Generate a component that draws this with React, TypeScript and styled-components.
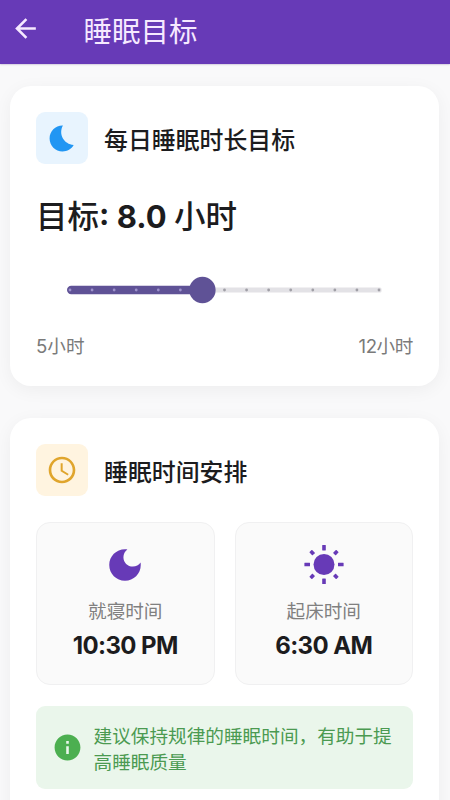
import React from "react";
import styled, { createGlobalStyle } from "styled-components";

const GlobalStyle = createGlobalStyle`
  * { box-sizing: border-box; }
  html, body { margin: 0; height: 100%; overflow: hidden; }
  body {
    background: #f9f9fa;
    color: #1c1c1e;
    font-family: Inter, "Noto Sans CJK SC", sans-serif;
  }
  svg { display: block; flex: none; }
`;

const Screen = styled.div`
  height: 800px;
  overflow: hidden;
  display: flex;
  flex-direction: column;
`;

const AppBar = styled.header`
  flex: none;
  height: 64px;
  padding: 0 0 5px 10px;
  display: flex;
  align-items: center;
  gap: 42.5px;
  background: #673ab7;
  color: #f6e9ff;
  box-shadow: 0 0 2px rgba(70, 40, 120, 0.5);
`;

const BackButton = styled.button`
  padding: 0;
  margin-top: -3px;
  border: 0;
  background: none;
  color: inherit;
`;

const AppTitle = styled.h1`
  margin: 0;
  font: 400 28.5px/40px "Noto Sans CJK SC", sans-serif;
`;

const Content = styled.main`
  flex: none;
  padding: 22px 11px 0 10px;
  display: flex;
  flex-direction: column;
  gap: 32px;
`;

const Card = styled.section<{ $height: number }>`
  height: ${(p) => p.$height}px;
  padding: 26px 26px 0;
  border-radius: 21px;
  background: #fff;
  box-shadow: 0 4px 18px rgba(0, 0, 0, 0.05);
`;

const CardHeader = styled.div`
  display: flex;
  align-items: center;
  gap: 16px;
`;

const IconBox = styled.div<{ $bg: string; $fg: string }>`
  width: 52px;
  height: 52px;
  border-radius: 9px;
  display: grid;
  place-items: center;
  background: ${(p) => p.$bg};
  color: ${(p) => p.$fg};
`;

const CardTitle = styled.h2`
  margin: 2px 0 0;
  font: 500 23.9px/36px "Noto Sans CJK SC", sans-serif;
`;

const Goal = styled.div`
  height: 46px;
  margin-top: 27px;
  display: flex;
  align-items: baseline;
  white-space: pre;
  font: 500 31.5px/46px "Noto Sans CJK SC", sans-serif;
`;

const GoalNumber = styled.span`
  font: 700 31px/46px Inter, sans-serif;
`;

const Slider = styled.div`
  height: 28px;
  margin: 39px 31px 0;
`;

const RangeLabels = styled.div`
  margin-top: 28px;
  display: flex;
  justify-content: space-between;
  font-size: 18.6px;
  line-height: 28px;
  color: #7a7a7a;
`;

const RangeLabel = styled.span<{ $tracking?: number }>`
  letter-spacing: ${(p) => p.$tracking ?? 0}px;
`;

const Tiles = styled.div`
  margin-top: 26px;
  display: grid;
  grid-template-columns: 1fr 1fr;
  gap: 20px;
`;

const Tile = styled.div`
  height: 163px;
  padding-top: 21px;
  border: 1.5px solid #f0f0f1;
  border-radius: 14px;
  background: #fafafa;
  display: flex;
  flex-direction: column;
  align-items: center;
  color: #673ab7;
`;

const TileLabel = styled.div`
  margin-top: 10px;
  font: 400 18.6px/28px "Noto Sans CJK SC", sans-serif;
  color: #808080;
`;

const TileTime = styled.div`
  margin-top: 4px;
  font-size: 24px;
  font-weight: 700;
  line-height: 36px;
  letter-spacing: -0.6px;
  color: #1c1c1e;
`;

const Tip = styled.div`
  height: 83px;
  margin-top: 21px;
  padding: 0 16px;
  border-radius: 9px;
  background: #eaf6eb;
  display: flex;
  align-items: center;
  gap: 10.5px;
  color: #4caf50;
`;

const TipText = styled.p`
  flex: none;
  width: 304px;
  margin: 1px 0 0;
  font: 400 18.65px/26.5px "Noto Sans CJK SC", sans-serif;
  color: #4b9a51;
`;

const MaterialIcon = ({ size, d }: { size: number; d: string }) => (
  <svg width={size} height={size} viewBox="0 0 24 24" fill="currentColor">
    <path d={d} />
  </svg>
);

const ICONS = {
  back: "M20 11H7.83l5.59-5.59L12 4l-8 8 8 8 1.41-1.41L7.83 13H20v-2z",
  bedtime:
    "M12.34 2.02C6.59 1.82 2 6.42 2 12c0 5.52 4.48 10 10 10 3.71 0 6.93-2.02 8.66-5.02-7.51-.25-12.09-8.43-8.32-14.96z",
  schedule:
    "M11.99 2C6.47 2 2 6.48 2 12s4.47 10 9.99 10C17.52 22 22 17.52 22 12S17.52 2 11.99 2zM12 20c-4.42 0-8-3.58-8-8s3.58-8 8-8 8 3.58 8 8-3.58 8-8 8zm.5-13H11v6l5.25 3.15.75-1.23-4.5-2.67z",
  darkMode:
    "M12 3c-4.97 0-9 4.03-9 9s4.03 9 9 9 9-4.03 9-9c0-.46-.04-.92-.1-1.36-.98 1.37-2.58 2.26-4.4 2.26-2.98 0-5.4-2.42-5.4-5.4 0-1.81.89-3.42 2.26-4.4-.44-.06-.9-.1-1.36-.1z",
  info: "M12 2C6.48 2 2 6.48 2 12s4.48 10 10 10 10-4.48 10-10S17.52 2 12 2zm1 15h-2v-6h2v6zm0-8h-2V7h2v2z",
};

const SunIcon = () => (
  <svg width="42" height="42" viewBox="-21 -20.5 42 42" fill="currentColor">
    <circle r="10.5" />
    {[0, 45, 90, 135, 180, 225, 270, 315].map((angle) => {
      const diagonal = angle % 90 !== 0;
      return (
        <rect
          key={angle}
          x="-1.8"
          y={diagonal ? -19 : -19.6}
          width="3.6"
          height={diagonal ? 4.4 : 5.6}
          rx="0.4"
          transform={`rotate(${angle})`}
        />
      );
    })}
  </svg>
);

const TICKS = 15;
const VALUE_INDEX = 6;
const tickX = (i: number) => 3 + (i * 309) / (TICKS - 1);

const HourSlider = () => (
  <Slider>
    <svg width="315" height="28" viewBox="0 0 315 28">
      <rect x="100" y="11.5" width="214.5" height="5" rx="1.5" fill="#e3e2e6" />
      <rect x="0" y="9.8" width="140" height="8.4" rx="4.2" fill="#5f5296" />
      {Array.from({ length: TICKS }, (_, i) => (
        <circle
          key={i}
          cx={tickX(i)}
          cy="14"
          r="1.4"
          fill={i < VALUE_INDEX ? "#9e92cc" : "#a09fa6"}
        />
      ))}
      <circle cx={tickX(VALUE_INDEX)} cy="14" r="13.2" fill="#5f5296" />
    </svg>
  </Slider>
);

export default function App() {
  return (
    <Screen>
      <GlobalStyle />
      <AppBar>
        <BackButton aria-label="返回">
          <MaterialIcon size={31} d={ICONS.back} />
        </BackButton>
        <AppTitle>睡眠目标</AppTitle>
      </AppBar>
      <Content>
        <Card $height={300}>
          <CardHeader>
            <IconBox $bg="#e8f4fe" $fg="#2196f3">
              <MaterialIcon size={31} d={ICONS.bedtime} />
            </IconBox>
            <CardTitle>每日睡眠时长目标</CardTitle>
          </CardHeader>
          <Goal>
            目标<GoalNumber>: 8.0 </GoalNumber>小时
          </Goal>
          <HourSlider />
          <RangeLabels>
            <RangeLabel>5小时</RangeLabel>
            <RangeLabel $tracking={-0.4}>12小时</RangeLabel>
          </RangeLabels>
        </Card>
        <Card $height={420}>
          <CardHeader>
            <IconBox $bg="#fff4e0" $fg="#e0a52c">
              <MaterialIcon size={32} d={ICONS.schedule} />
            </IconBox>
            <CardTitle>睡眠时间安排</CardTitle>
          </CardHeader>
          <Tiles>
            <Tile>
              <MaterialIcon size={42} d={ICONS.darkMode} />
              <TileLabel>就寝时间</TileLabel>
              <TileTime>10:30 PM</TileTime>
            </Tile>
            <Tile>
              <SunIcon />
              <TileLabel>起床时间</TileLabel>
              <TileTime>6:30 AM</TileTime>
            </Tile>
          </Tiles>
          <Tip>
            <MaterialIcon size={31} d={ICONS.info} />
            <TipText>建议保持规律的睡眠时间，有助于提高睡眠质量</TipText>
          </Tip>
        </Card>
      </Content>
    </Screen>
  );
}
